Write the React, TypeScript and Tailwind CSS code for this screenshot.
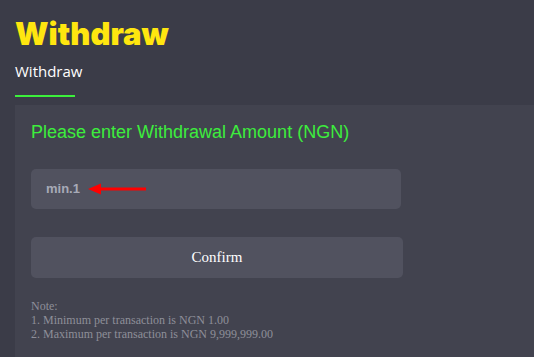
import React from "react";

export default function App() {
  return (
    <div className="w-[534px] h-[357px] overflow-hidden bg-[#3b3c48] pl-[15px] flex flex-col">
      <h1
        className="mt-[15px] h-[38px] leading-[38px] text-[31px] font-black text-[#ffe60f]"
        style={{ fontFamily: 'Inter, sans-serif' }}
      >
        Withdraw
      </h1>
      <div className="mt-[6px] flex flex-col">
        <div
          className="h-[24px] leading-[24px] text-[15px] text-white"
          style={{ fontFamily: '"Open Sans", sans-serif' }}
        >
          Withdraw
        </div>
        <div className="mt-[12px] w-[60px] h-[2px] bg-[#3cf03c]" />
      </div>
      <div className="mt-[8px] flex-1 bg-[#42434f] pl-[16px] pt-[15px]">
        <div
          className="h-[24px] leading-[24px] text-[18px] text-[#3ded3d]"
          style={{ fontFamily: '"Liberation Sans", Arial, sans-serif' }}
        >
          Please enter Withdrawal Amount (NGN)
        </div>
        <div className="mt-[25px] w-[370px] h-[40px] rounded-[5px] bg-[#51525f] flex items-center pl-[15px]">
          <span
            className="text-[13px] font-semibold text-[#a7aab7]"
            style={{ fontFamily: '"Liberation Sans", Arial, sans-serif' }}
          >
            min.1
          </span>
          <svg width="60" height="14" viewBox="0 0 60 14" className="ml-[8px]">
            <polygon points="0,7 13,1.5 13,12.5" fill="#ff0000" />
            <rect x="12" y="5.5" width="46" height="3" fill="#ff0000" />
          </svg>
        </div>
        <button
          className="mt-[28px] w-[372px] h-[41px] rounded-[5px] bg-[#51525f] text-white text-[15px]"
          style={{ fontFamily: '"Liberation Serif", "Times New Roman", serif' }}
        >
          Confirm
        </button>
        <div
          className="mt-[21px] text-[12px] leading-[14px] text-[#8e8f99]"
          style={{ fontFamily: '"Liberation Serif", "Times New Roman", serif' }}
        >
          <div>Note:</div>
          <div>1. Minimum per transaction is NGN 1.00</div>
          <div>2. Maximum per transaction is NGN 9,999,999.00</div>
        </div>
      </div>
    </div>
  );
}
